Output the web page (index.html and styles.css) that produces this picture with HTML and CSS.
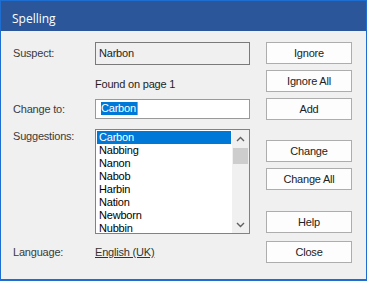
FILE: index.html
```html
<!DOCTYPE html>
<html>
<head>
<meta charset="utf-8">
<link rel="stylesheet" href="styles.css">
</head>
<body>
<div class="window">
  <div class="titlebar">Spelling</div>
  <div class="content">
    <div class="left">
      <div class="row r-suspect"><span class="lbl">Suspect:</span><div class="suspect">Narbon</div></div>
      <div class="row r-found"><span class="lbl"></span><span class="found">Found on page 1</span></div>
      <div class="row r-change"><span class="lbl">Change to:</span><div class="input"><span class="sel">Carbon</span></div></div>
      <div class="row r-sugg"><span class="lbl">Suggestions:</span>
        <div class="list">
          <div class="items">
            <div class="item selected">Carbon</div>
            <div class="item">Nabbing</div>
            <div class="item">Nanon</div>
            <div class="item">Nabob</div>
            <div class="item">Harbin</div>
            <div class="item">Nation</div>
            <div class="item">Newborn</div>
            <div class="item">Nubbin</div>
          </div>
          <div class="scrollbar">
            <div class="arrow"><svg width="9" height="6" viewBox="0 0 9 6"><path d="M1 5 L4.5 1.5 L8 5" fill="none" stroke="#606060" stroke-width="1.4"/></svg></div>
            <div class="track"><div class="thumb"></div></div>
            <div class="arrow"><svg width="9" height="6" viewBox="0 0 9 6"><path d="M1 1 L4.5 4.5 L8 1" fill="none" stroke="#606060" stroke-width="1.4"/></svg></div>
          </div>
        </div>
      </div>
      <div class="row r-lang"><span class="lbl">Language:</span><span class="link">English (UK)</span></div>
    </div>
    <div class="right">
      <div class="btn">Ignore</div>
      <div class="btn">Ignore All</div>
      <div class="btn">Add</div>
      <div class="btn b-change">Change</div>
      <div class="btn">Change All</div>
      <div class="btn b-help">Help</div>
      <div class="btn b-close">Close</div>
    </div>
  </div>
</div>
</body>
</html>
```
FILE: styles.css
```css
* { box-sizing: border-box; }
html, body { margin: 0; padding: 0; }
body {
  width: 367px;
  height: 281px;
  overflow: hidden;
  font-family: "Liberation Sans", Arial, sans-serif;
  font-size: 11px;
  letter-spacing: -0.2px;
  color: #333;
}
.window {
  width: 367px;
  height: 281px;
  border: 1px solid #1e6dd0;
  border-bottom-width: 2px;
  background: #f0f0f0;
  display: flex;
  flex-direction: column;
}
.titlebar {
  height: 30px;
  background: #2b579a;
  color: #fff;
  font-family: "Open Sans", "Noto Sans", sans-serif;
  font-size: 12px;
  letter-spacing: 0;
  padding: 10px 0 0 11px;
  line-height: 16px;
}
.content {
  display: flex;
  padding: 11px 0 0 12px;
  gap: 16px;
}
.left { display: flex; flex-direction: column; }
.row { display: flex; align-items: center; }
.lbl { width: 82px; flex: none; color: #3a3a3a; line-height: 13px; }
.r-suspect { height: 23px; }
.suspect {
  width: 155px;
  height: 23px;
  border: 1px solid #7a7a7a;
  background: #f0f0f0;
  padding-left: 3px;
  line-height: 21px;
  color: #1e1e1e;
}
.r-found { margin-top: 13px; height: 13px; }
.found { line-height: 13px; color: #1e1e1e; }
.r-change { margin-top: 8px; height: 20px; }
.input {
  width: 155px;
  height: 20px;
  border: 1px solid #999;
  background: #fff;
  padding: 2px 0 0 5px;
}
.sel {
  display: inline-block;
  background: #0078d7;
  color: #fff;
  line-height: 13px;
  height: 13px;
  padding-right: 1px;
  border-right: 1px solid #f08a24;
}
.r-sugg { margin-top: 10px; align-items: flex-start; }
.r-sugg .lbl { padding-top: 1px; }
.list {
  width: 155px;
  height: 105px;
  border: 1px solid #828282;
  background: #fff;
  display: flex;
}
.items { flex: 1; padding: 1px; }
.item {
  height: 13px;
  line-height: 13px;
  padding-left: 2px;
  color: #000;
}
.item.selected { background: #0078d7; color: #fff; }
.scrollbar {
  width: 17px;
  background: #f0f0f0;
  display: flex;
  flex-direction: column;
}
.arrow {
  height: 17px;
  display: flex;
  align-items: center;
  justify-content: center;
}
.track { flex: 1; padding: 1px 1px 0 1px; }
.thumb { height: 16px; background: #cdcdcd; }
.r-lang { margin-top: 12px; height: 13px; }
.link { text-decoration: underline; color: #333; line-height: 13px; }
.right { display: flex; flex-direction: column; }
.btn {
  width: 86px;
  height: 22px;
  border: 1px solid #adadad;
  background: #fdfdfd;
  color: #222;
  text-align: center;
  line-height: 20px;
  margin-bottom: 6px;
}
.b-change { margin-top: 14px; }
.b-help { margin-top: 15px; margin-bottom: 8px; }
```
